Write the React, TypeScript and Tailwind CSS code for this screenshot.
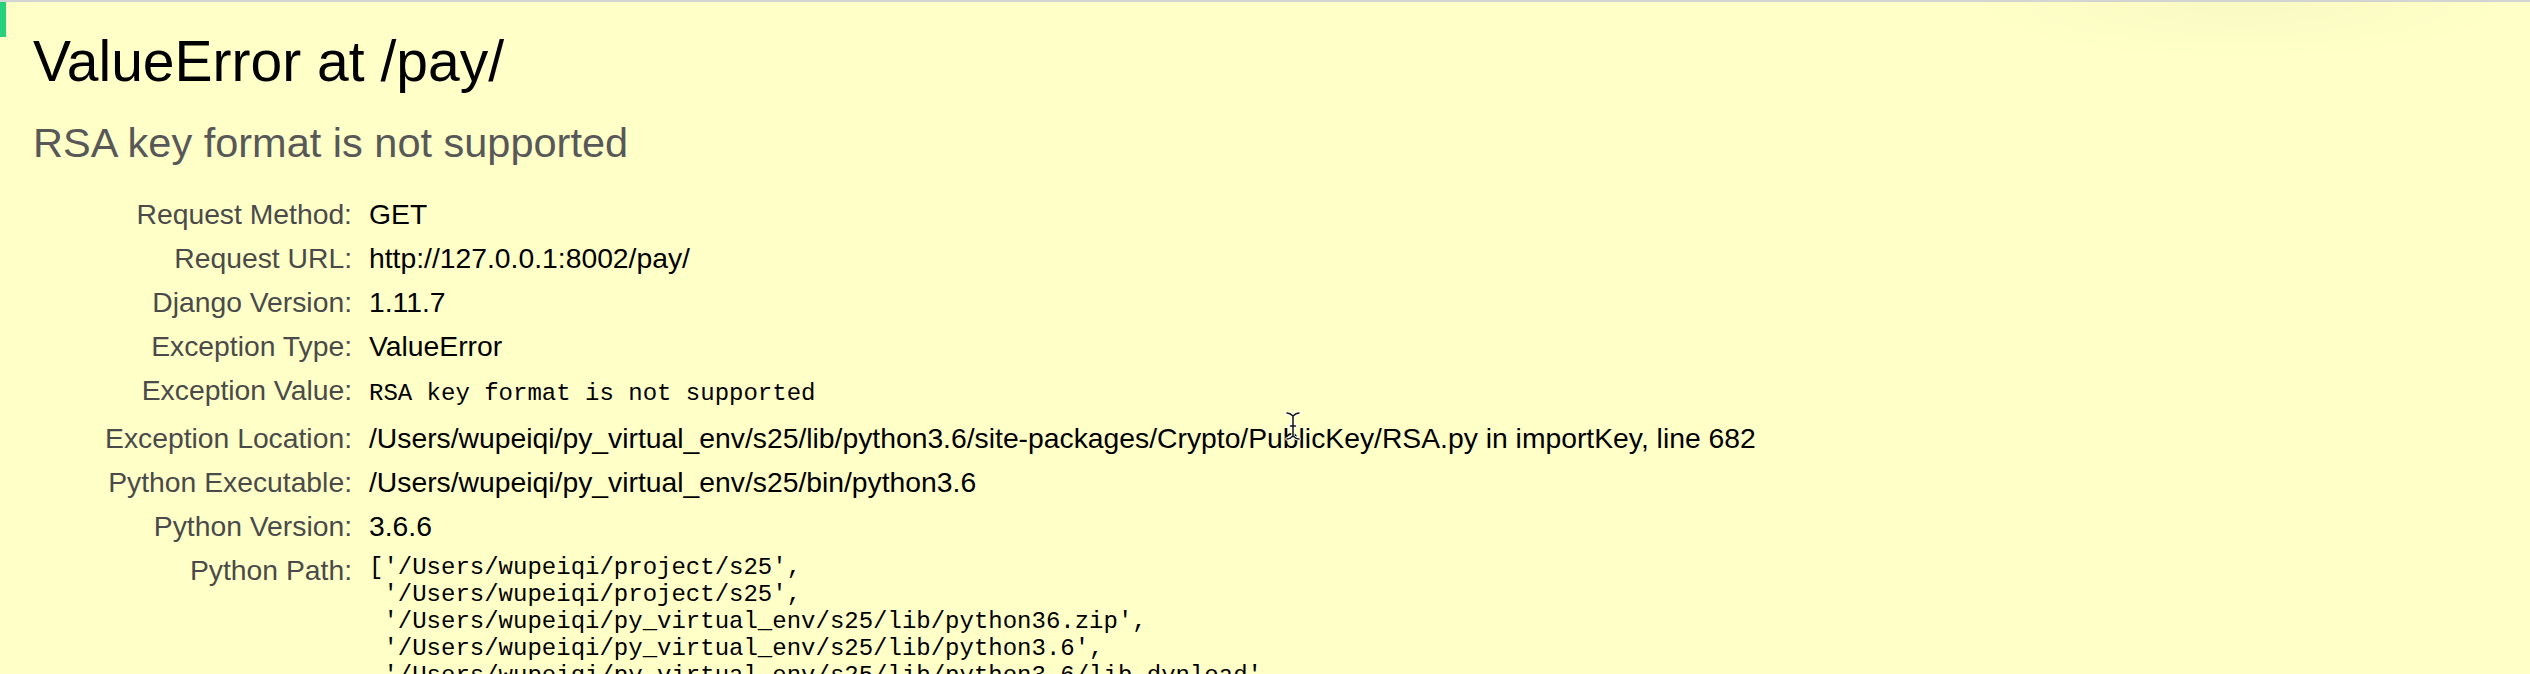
const rows: { label: string; value: string; mono?: boolean }[] = [
  { label: 'Request Method:', value: 'GET' },
  { label: 'Request URL:', value: 'http://127.0.0.1:8002/pay/' },
  { label: 'Django Version:', value: '1.11.7' },
  { label: 'Exception Type:', value: 'ValueError' },
  { label: 'Exception Value:', value: 'RSA key format is not supported', mono: true },
  {
    label: 'Exception Location:',
    value:
      '/Users/wupeiqi/py_virtual_env/s25/lib/python3.6/site-packages/Crypto/PublicKey/RSA.py in importKey, line 682',
  },
  { label: 'Python Executable:', value: '/Users/wupeiqi/py_virtual_env/s25/bin/python3.6' },
  { label: 'Python Version:', value: '3.6.6' },
]

const pythonPath = [
  "['/Users/wupeiqi/project/s25',",
  " '/Users/wupeiqi/project/s25',",
  " '/Users/wupeiqi/py_virtual_env/s25/lib/python36.zip',",
  " '/Users/wupeiqi/py_virtual_env/s25/lib/python3.6',",
  " '/Users/wupeiqi/py_virtual_env/s25/lib/python3.6/lib-dynload',",
  " '/usr/local/Cellar/python/3.6.6/Frameworks/Python.framework/Versions/3.6/lib/python3.6',",
  " '/Users/wupeiqi/py_virtual_env/s25/lib/python3.6/site-packages']",
]

function TextCursor() {
  return (
    <svg
      className="absolute left-[1285px] top-[409px]"
      width="16"
      height="30"
      viewBox="0 0 16 30"
      fill="none"
    >
      <path
        d="M2 2 Q5 2 8 5 Q11 2 14 2 M8 5 V25 M2 28 Q5 28 8 25 Q11 28 14 28 M5 15 H11"
        stroke="#fff"
        strokeWidth="3.5"
        strokeLinecap="round"
      />
      <path
        d="M2 2 Q5 2 8 5 Q11 2 14 2 M8 5 V25 M2 28 Q5 28 8 25 Q11 28 14 28 M5.5 15 H10.5"
        stroke="#111"
        strokeWidth="1.5"
        strokeLinecap="round"
      />
    </svg>
  )
}

export default function App() {
  return (
    <div className="relative h-[674px] overflow-hidden border-t-2 border-[#d3d3d3] bg-[#ffffc8] font-['Liberation_Sans',Arial,sans-serif]">
      {/* browser chrome bits */}
      <div className="absolute left-0 top-0 h-[35px] w-[6px] bg-[#27d17c]" />
      <div className="absolute left-[1950px] top-0 h-[60px] w-[580px] bg-[radial-gradient(ellipse_at_top,rgba(0,0,0,0.025),transparent_70%)]" />

      {/* Summary */}
      <div className="pl-[33px] pt-[27px]">
        <h1 className="text-[57px] font-normal leading-[64px] text-black">ValueError at /pay/</h1>
        <p className="mt-[26px] text-[41.5px] leading-[48px] text-[#585858]">
          RSA key format is not supported
        </p>
      </div>

      <div className="mt-[25px] grid grid-cols-[352px_1fr] gap-x-[17px] text-[28.3px] leading-[32px]">
        {rows.map(row => (
          <div key={row.label} className="contents">
            <div className="py-[6px] text-right text-[#4a4a4a]">{row.label}</div>
            <div className="whitespace-nowrap py-[6px] text-black">
              {row.mono ? (
                <span className="font-['Liberation_Mono','Courier_New',monospace] text-[24px]">
                  {row.value}
                </span>
              ) : (
                row.value
              )}
            </div>
          </div>
        ))}
        <div className="py-[6px] text-right text-[#4a4a4a]">Python Path:</div>
        <div className="py-[6px]">
          <pre className="font-['Liberation_Mono','Courier_New',monospace] text-[24px] leading-[27px] text-black">
            {pythonPath.join('\n')}
          </pre>
        </div>
      </div>

      <TextCursor />
    </div>
  )
}
